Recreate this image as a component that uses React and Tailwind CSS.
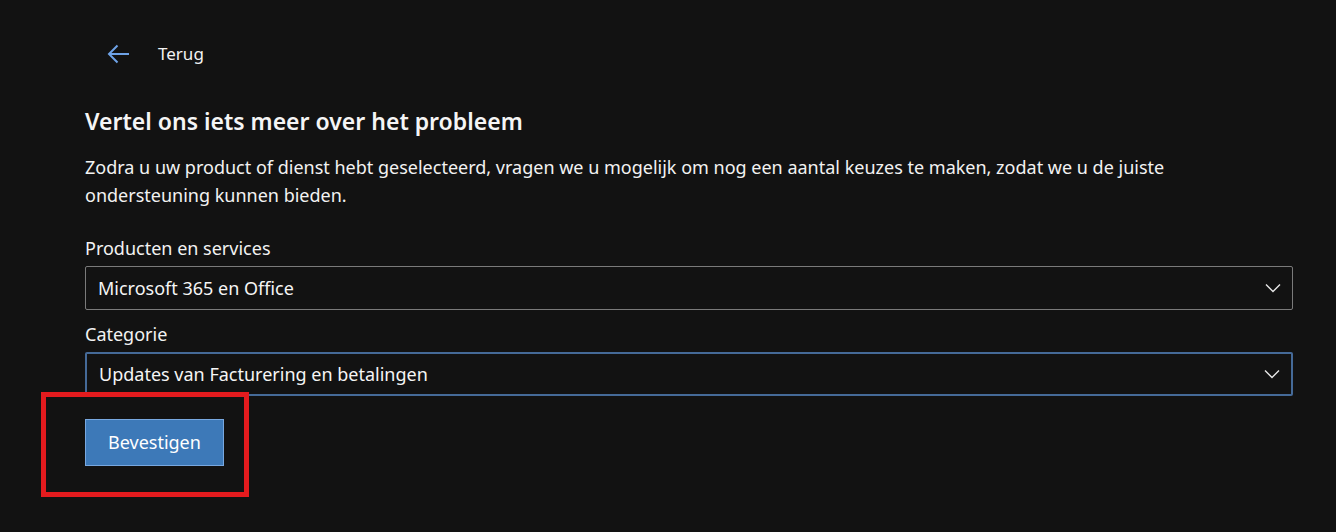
import { useState } from "react";

function Chevron() {
    return (
        <svg width="18" height="18" viewBox="0 0 18 18" className="shrink-0">
            <path d="M2 5.5 L9 12.5 L16 5.5" fill="none" stroke="#e6e6e6" strokeWidth="1.4" />
        </svg>
    );
}

function SelectBox({ label, value, active }) {
    return (
        <div className="flex flex-col">
            <label className="text-[18px] leading-[24px] text-[#f2f2f2] mb-[6px]">{label}</label>
            <div
                className={`flex items-center justify-between h-[44px] pl-[12px] pr-[10px] rounded-[2px] ${active ? 'border-2 border-[#456a98]' : 'border border-[#7a7a7a]'}`}
            >
                <span className="text-[18px] text-[#f5f5f5]">{value}</span>
                <Chevron />
            </div>
        </div>
    );
}

export default function App() {
    const [confirmed, setConfirmed] = useState(false);

    return (
        <div className="w-[1336px] h-[532px] bg-[#121212] text-white overflow-hidden" style={{ fontFamily: '"Noto Sans", "Open Sans", sans-serif' }}>
            <div className="pl-[85px] pr-[43px] pt-[40px]">
                <button className="flex items-center gap-[26px] pl-[21px] h-[28px] text-[17px] text-[#f2f2f2]">
                    <svg width="26" height="22" viewBox="0 0 26 22">
                        <path d="M23 11 H3 M11.5 2.5 L3 11 L11.5 19.5" fill="none" stroke="#6ea2e6" strokeWidth="2" />
                    </svg>
                    <span>Terug</span>
                </button>

                <h1 className="mt-[37px] text-[23px] leading-[32px] font-semibold text-[#f5f5f5]">Vertel ons iets meer over het probleem</h1>
                <p className="mt-[16px] text-[18px] leading-[28px] text-[#f2f2f2]">
                    Zodra u uw product of dienst hebt geselecteerd, vragen we u mogelijk om nog een aantal keuzes te maken, zodat we u de juiste ondersteuning kunnen bieden.
                </p>

                <div className="mt-[27px] flex flex-col gap-[12px]">
                    <SelectBox label="Producten en services" value="Microsoft 365 en Office" />
                    <SelectBox label="Categorie" value="Updates van Facturering en betalingen" active />
                </div>

                <div className="relative mt-[23px] w-fit">
                    <button
                        onClick={() => setConfirmed(!confirmed)}
                        className="h-[47px] px-[22px] bg-[#3d79b8] border border-[#78a8e0] text-[18px] text-white"
                    >
                        Bevestigen
                    </button>
                    <div className="absolute left-[-44px] top-[-27px] w-[208px] h-[105px] border-[5px] border-[#e41b1e] pointer-events-none" />
                </div>
            </div>
        </div>
    );
}
